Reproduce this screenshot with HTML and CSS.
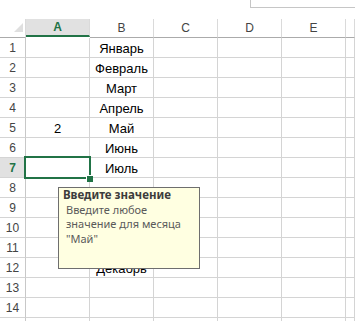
FILE: index.html
```html
<!DOCTYPE html>
<html lang="ru">
<head>
  <meta charset="UTF-8" />
  <title>Проверка данных</title>
  <link rel="stylesheet" href="styles.css">
</head>
<body>
  <div class="topbar">
    <div class="formula-box"></div>
  </div>

  <div class="sheet">
    <div class="corner"><span class="tri"></span></div>
    <div class="col-head active">A</div>
    <div class="col-head">B</div>
    <div class="col-head">C</div>
    <div class="col-head">D</div>
    <div class="col-head">E</div>
    <div class="col-head"></div>

    <div class="row-head">1</div><div class="cell"></div><div class="cell">Январь</div><div class="cell"></div><div class="cell"></div><div class="cell"></div><div class="cell"></div>
    <div class="row-head">2</div><div class="cell"></div><div class="cell">Февраль</div><div class="cell"></div><div class="cell"></div><div class="cell"></div><div class="cell"></div>
    <div class="row-head">3</div><div class="cell"></div><div class="cell">Март</div><div class="cell"></div><div class="cell"></div><div class="cell"></div><div class="cell"></div>
    <div class="row-head">4</div><div class="cell"></div><div class="cell">Апрель</div><div class="cell"></div><div class="cell"></div><div class="cell"></div><div class="cell"></div>
    <div class="row-head">5</div><div class="cell">2</div><div class="cell">Май</div><div class="cell"></div><div class="cell"></div><div class="cell"></div><div class="cell"></div>
    <div class="row-head">6</div><div class="cell"></div><div class="cell">Июнь</div><div class="cell"></div><div class="cell"></div><div class="cell"></div><div class="cell"></div>
    <div class="row-head active">7</div><div class="cell selected"><span class="sel-box"></span><span class="sel-handle"></span></div><div class="cell">Июль</div><div class="cell"></div><div class="cell"></div><div class="cell"></div><div class="cell"></div>
    <div class="row-head">8</div><div class="cell"></div><div class="cell"></div><div class="cell"></div><div class="cell"></div><div class="cell"></div><div class="cell"></div>
    <div class="row-head">9</div><div class="cell"></div><div class="cell"></div><div class="cell"></div><div class="cell"></div><div class="cell"></div><div class="cell"></div>
    <div class="row-head">10</div><div class="cell"></div><div class="cell"></div><div class="cell"></div><div class="cell"></div><div class="cell"></div><div class="cell"></div>
    <div class="row-head">11</div><div class="cell"></div><div class="cell"></div><div class="cell"></div><div class="cell"></div><div class="cell"></div><div class="cell"></div>
    <div class="row-head">12</div><div class="cell"></div><div class="cell">Декабрь</div><div class="cell"></div><div class="cell"></div><div class="cell"></div><div class="cell"></div>
    <div class="row-head">13</div><div class="cell"></div><div class="cell"></div><div class="cell"></div><div class="cell"></div><div class="cell"></div><div class="cell"></div>
    <div class="row-head">14</div><div class="cell"></div><div class="cell"></div><div class="cell"></div><div class="cell"></div><div class="cell"></div><div class="cell"></div>
    <div class="row-head"></div><div class="cell"></div><div class="cell"></div><div class="cell"></div><div class="cell"></div><div class="cell"></div><div class="cell"></div>

    <!-- input message for the selected cell -->
    <div class="tooltip">
      <div class="tip-title">Введите значение</div>
      <div class="tip-text">Введите любое<br>значение для месяца<br>"Май"</div>
    </div>
  </div>
</body>
</html>
```

FILE: styles.css
```css
html, body {
  margin: 0;
  height: 321px;
  overflow: hidden;
  background: #fff;
}

body {
  font-family: "Liberation Sans", Arial, sans-serif;
  color: #000;
}

.topbar {
  height: 19px;
  display: flex;
  justify-content: flex-end;
  align-items: flex-start;
}

.formula-box {
  width: 104px;
  height: 7px;
  border-left: 1px solid #c6c6c6;
  border-bottom: 1px solid #c6c6c6;
}

.sheet {
  position: relative;
  display: grid;
  grid-template-columns: 26px repeat(5, 64px) 1fr;
  grid-template-rows: 19px;
  grid-auto-rows: 20px;
}

.sheet > div {
  box-sizing: border-box;
}

.corner {
  border-bottom: 1px solid #ababab;
  border-right: 1px solid #dadada;
  display: flex;
  justify-content: flex-end;
  align-items: flex-end;
  padding: 0 2px 5px 0;
}

.tri {
  width: 0;
  height: 0;
  border-left: 9px solid transparent;
  border-bottom: 9px solid #dfdfdf;
}

.col-head {
  border-right: 1px solid #dadada;
  border-bottom: 1px solid #ababab;
  font-size: 12px;
  color: #444;
  text-align: center;
  line-height: 18px;
}

.col-head.active {
  background: #e1e1e1;
  color: #217346;
  font-weight: bold;
  border-bottom: 2px solid #217346;
  line-height: 17px;
  margin-bottom: 1px;
  height: 18px;
}

.row-head {
  border-right: 1px solid #c8c8c8;
  border-bottom: 1px solid #d4d4d4;
  font-size: 12px;
  color: #444;
  text-align: center;
  line-height: 17px;
  padding-top: 2px;
}

.row-head.active {
  background: #e1e1e1;
  color: #217346;
  font-weight: bold;
}

.cell {
  border-right: 1px solid #d4d4d4;
  border-bottom: 1px solid #d4d4d4;
  font-size: 13px;
  text-align: center;
  line-height: 17px;
  padding-top: 2px;
  white-space: nowrap;
}

.cell.selected {
  position: relative;
}

.sel-box {
  position: absolute;
  left: -2px;
  top: -2px;
  width: 67px;
  height: 23px;
  box-sizing: border-box;
  border: 2px solid #217346;
}

.sel-handle {
  position: absolute;
  left: 60px;
  top: 17px;
  width: 6px;
  height: 6px;
  background: #217346;
  border-left: 1px solid #fff;
  border-top: 1px solid #fff;
}

.tooltip {
  position: absolute;
  left: 58px;
  top: 168px;
  width: 142px;
  height: 82px;
  box-sizing: border-box;
  background: #ffffe1;
  border: 1px solid #6e6e6e;
  padding: 0 0 0 4px;
  font-family: "Noto Sans", "Liberation Sans", sans-serif;
  font-size: 11px;
  line-height: 14.5px;
}

.tip-title {
  font-weight: bold;
  font-size: 11.5px;
  color: #3c3c3c;
}

.tip-text {
  color: #5a5a5a;
  padding-left: 3px;
}
```
